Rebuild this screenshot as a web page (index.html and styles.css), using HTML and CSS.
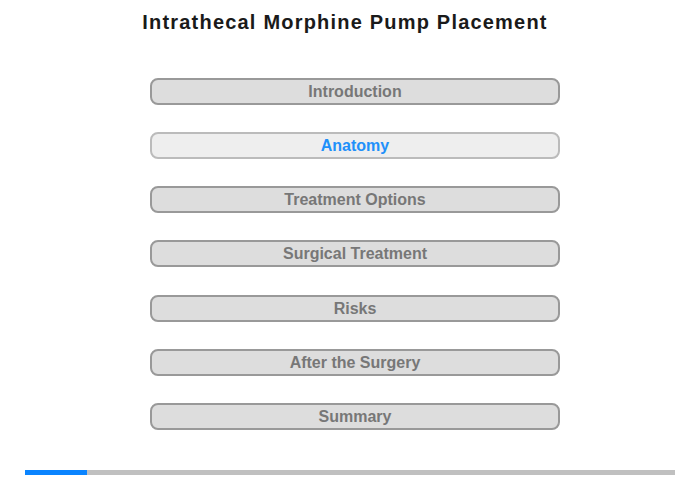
FILE: index.html
```html
<!DOCTYPE html>
<html>
<head>
<meta charset="utf-8">
<title>Intrathecal Morphine Pump Placement</title>
<link rel="stylesheet" href="styles.css">
</head>
<body>
<div class="page">
  <h1 class="title">Intrathecal Morphine Pump Placement</h1>
  <nav class="menu">
    <div class="item">Introduction</div>
    <div class="item active">Anatomy</div>
    <div class="item">Treatment Options</div>
    <div class="item">Surgical Treatment</div>
    <div class="item">Risks</div>
    <div class="item">After the Surgery</div>
    <div class="item">Summary</div>
  </nav>
  <div class="progress"><div class="progress-fill" style="width:62px"></div></div>
</div>
</body>
</html>
```

FILE: styles.css
```css
html, body {
  margin: 0;
  padding: 0;
  background: #fff;
}
.page {
  width: 700px;
  height: 480px;
  font-family: "Liberation Sans", Arial, sans-serif;
  padding-top: 10px;
  box-sizing: border-box;
}
.title {
  margin: 0;
  padding-right: 10px;
  font-size: 20px;
  line-height: 24px;
  font-weight: bold;
  letter-spacing: 1.2px;
  color: #1a1a1a;
  text-align: center;
}
.menu {
  margin: 44px 0 0 150px;
  width: 410px;
  display: flex;
  flex-direction: column;
  gap: 27.17px;
}
.item {
  box-sizing: border-box;
  height: 27px;
  border: 2px solid #999;
  border-radius: 8px;
  background: #ddd;
  color: #777;
  font-size: 16px;
  font-weight: bold;
  line-height: 23px;
  text-align: center;
}
.item.active {
  background: #eee;
  border-color: #bbb;
  color: #2090fa;
}
.progress {
  margin: 40px 25px 0 25px;
  height: 5px;
  background: #c0c0c0;
}
.progress-fill {
  height: 100%;
  background: #0a84ff;
}
```
